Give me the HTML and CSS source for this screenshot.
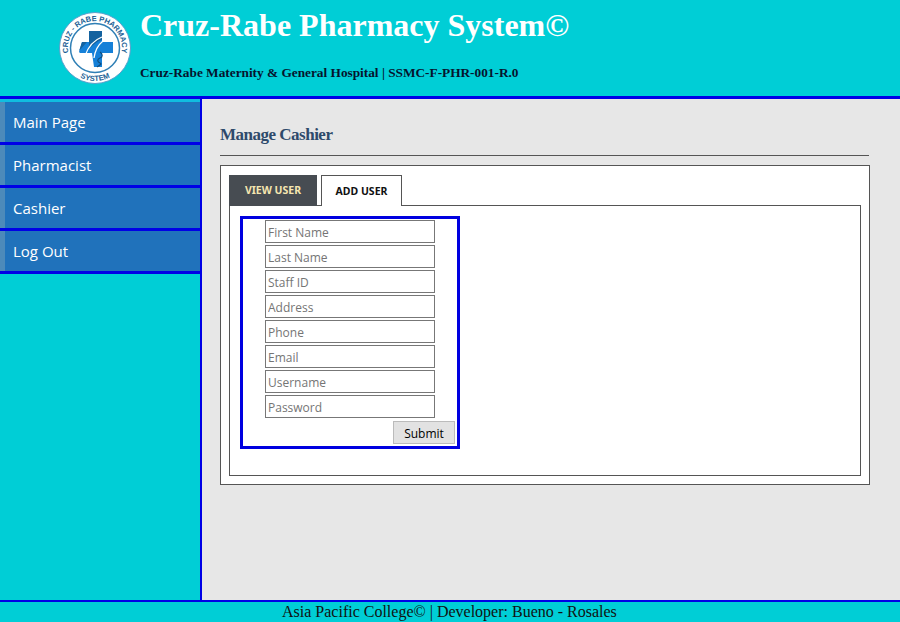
FILE: index.html
```html
<!DOCTYPE html>
<html lang="en">
<head>
    <meta charset="UTF-8">
    <title>Manage Cashier</title>
    <link rel="stylesheet" href="styles.css">
</head>
<body>
  <header class="top">
    <svg class="logo" width="74" height="74" viewBox="0 0 74 74">
      <defs>
        <path id="arcTop" d="M10.9 44A27 27 0 1 1 63.100 44"/>
        <path id="arcBottom" d="M20.500 65.600A33 33 0 0 0 53.500 65.600"/>
      </defs>
      <circle cx="37" cy="37" r="35.500" fill="#fff" stroke="#5aa0cc" stroke-width="1"/>
      <circle cx="37" cy="37" r="24.500" fill="#fff" stroke="#2f7fb5" stroke-width="1.500"/>
      <path d="M31 20h13v11h11v11h-11v14h-8l-2-14h-12l-1-1 3-10h7z" fill="#1580d8"/>
      <path d="M31 20h13v9c-5 1-9 5-13 9zM24 31h5l-8 9z" fill="#14629f"/>
      <path d="M27 45c3-9 9-16 17-19M36 47c1-7 4-13 9-17" fill="none" stroke="#fff" stroke-width="1.300"/>
      <path d="M42 41c3 2 3 5 0 6s-3 4 0 5-2 3-3 4" fill="none" stroke="#0f4a7a" stroke-width="1.100"/>
      <text class="logo-text"><textPath href="#arcTop" startOffset="50%" text-anchor="middle">CRUZ - RABE PHARMACY</textPath></text>
      <text class="logo-text"><textPath href="#arcBottom" startOffset="50%" text-anchor="middle">SYSTEM</textPath></text>
    </svg>
    <div class="brand">
      <h1>Cruz-Rabe Pharmacy System©</h1>
      <p>Cruz-Rabe Maternity &amp; General Hospital | SSMC-F-PHR-001-R.0</p>
    </div>
  </header>

  <div class="middle">
    <nav class="side">
      <ul>
        <li><a href="#">Main Page</a></li>
        <li><a href="#">Pharmacist</a></li>
        <li><a href="#">Cashier</a></li>
        <li><a href="#">Log Out</a></li>
      </ul>
    </nav>

    <main class="content">
      <h2>Manage Cashier</h2>
      <hr class="rule">
      <div class="box">
        <div class="tabs">
          <a class="tab tab-dark" href="#">VIEW USER</a>
          <a class="tab tab-light" href="#">ADD USER</a>
        </div>
        <div class="panel">
          <form class="user-form">
            <input type="text" placeholder="First Name">
            <input type="text" placeholder="Last Name">
            <input type="text" placeholder="Staff ID">
            <input type="text" placeholder="Address">
            <input type="text" placeholder="Phone">
            <input type="text" placeholder="Email">
            <input type="text" placeholder="Username">
            <input type="password" placeholder="Password">
            <input class="submit" type="button" value="Submit">
          </form>
        </div>
      </div>
    </main>
  </div>

  <footer class="bottom">Asia Pacific College© | Developer: Bueno - Rosales</footer>
</body>
</html>
```

FILE: styles.css
```css
* {
    box-sizing: border-box;
}

body {
    margin: 0;
    height: 622px;
    display: flex;
    flex-direction: column;
    background-color: #00ced6;
    font-family: "Liberation Serif", serif;
}

/* header */
.top {
    height: 99px;
    flex: none;
    display: flex;
    padding-left: 58px;
    border-bottom: 3px solid #0000e6;
}

.logo {
    margin-top: 11px;
    margin-right: 8px;
    flex: none;
}

.logo-text {
    font-family: "Liberation Sans", sans-serif;
    font-size: 7.500px;
    font-weight: bold;
    fill: #1c5f95;
}

.brand h1 {
    margin: 7px 0 0;
    font-size: 32px;
    line-height: 37px;
    color: #fff;
}

.brand p {
    margin: 21px 0 0;
    font-size: 13.300px;
    line-height: 15px;
    font-weight: bold;
    color: #06142e;
}

/* sidebar + content */
.middle {
    flex: 1;
    display: flex;
    min-height: 0;
}

.side {
    width: 202px;
    flex: none;
    border-right: 2px solid #0000e6;
    padding-top: 3px;
    background: linear-gradient(#10bde0 3px, #00ced6 3px);
}

.side ul {
    list-style-type: none;
    margin: 0;
    padding: 0;
}

.side li {
    border-bottom: 3px solid #0000e6;
}

.side a {
    display: block;
    height: 40px;
    padding-left: 8px;
    line-height: 40px;
    background-color: #2072bb;
    border-left: 5px solid #4c8aba;
    color: #fff;
    font-family: "Open Sans", sans-serif;
    font-size: 15px;
    text-decoration: none;
}

.content {
    flex: 1;
    background-color: #e7e7e7;
    padding: 26px 30px 0 18px;
}

.content h2 {
    margin: 0;
    font-size: 17px;
    line-height: 20px;
    color: #2e4a6b;
    letter-spacing: -0.500px;
}

.rule {
    margin: 10px 1px 9px 0;
    height: 1px;
    border: 0;
    background-color: #555;
}

.box {
    height: 320px;
    padding: 9px 8px 8px 8px;
    background-color: #fff;
    border: 1px solid #555;
}

.tabs {
    display: flex;
    gap: 4px;
    height: 31px;
}

.tab {
    height: 31px;
    font-family: "Noto Sans", sans-serif;
    font-size: 10.500px;
    font-weight: bold;
    line-height: 30px;
    text-align: center;
    text-decoration: none;
}

.tab-dark {
    width: 88px;
    background-color: #474c52;
    color: #f5e6b0;
}

.tab-light {
    width: 81px;
    background-color: #fff;
    border: 1px solid #555;
    border-bottom: 0;
    color: #111;
}

.panel {
    height: 271px;
    margin-top: -1px;
    padding: 10px;
    border: 1px solid #555;
}

.user-form {
    width: 220px;
    height: 233px;
    padding: 1px 2px 0 22px;
    border: 3px solid #0000e0;
}

.user-form input {
    display: block;
    width: 170px;
    height: 23px;
    margin-bottom: 2px;
    padding: 2px 2px 0;
    border: 1px solid #777;
    border-radius: 0;
    background-color: #fff;
    font-family: "Open Sans", sans-serif;
    font-size: 12px;
    outline: none;
}

.user-form input::placeholder {
    color: #757575;
    opacity: 1;
}

.user-form .submit {
    width: 62px;
    margin: 3px 0 0 128px;
    padding: 2px 0 0;
    background-color: #e2e2e2;
    border: 1px solid #bbb;
    color: #000;
    font-size: 12px;
}

/* footer */
.bottom {
    height: 22px;
    flex: none;
    border-top: 2px solid #0000e6;
    padding-left: 282px;
    font-size: 16px;
    line-height: 19px;
    color: #111;
}
```
